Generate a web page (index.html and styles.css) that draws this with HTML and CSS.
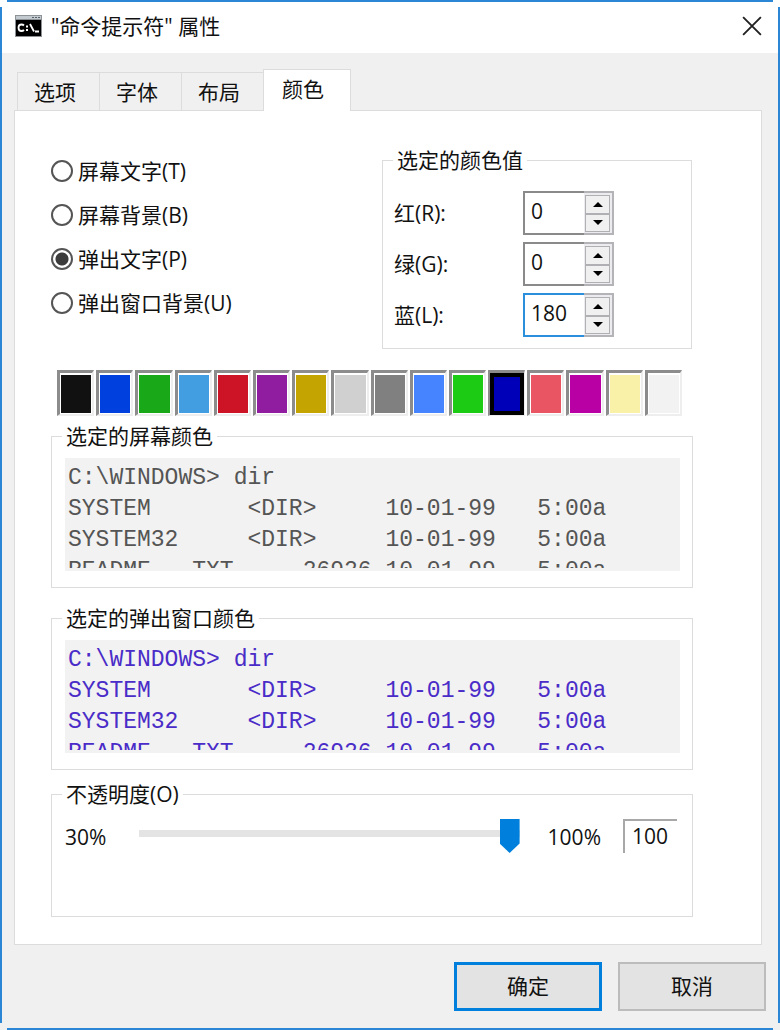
FILE: index.html
```html
<!DOCTYPE html>
<html lang="zh-CN">
<head>
<meta charset="utf-8">
<meta name="viewport" content="width=device-width, initial-scale=1">
<title>"命令提示符" 属性</title>
<link rel="stylesheet" href="styles.css">
</head>
<body>
<form class="window">
  <header class="titlebar">
    <svg class="app-icon" viewBox="0 0 27 22" aria-hidden="true">
      <rect width="27" height="22" fill="#8d9296"/>
      <rect x="1" y="1" width="25" height="3" fill="#c3cbd0"/>
      <path d="M17 2h2v1h-2zM20 2h2v1h-2zM23 2h2v1h-2z" fill="#59636b"/>
      <rect x="1" y="5" width="25" height="16" fill="#000"/>
      <path d="M9 10.500Q8 9.500 6.500 9.500Q3.500 9.500 3.500 12.700Q3.500 16 6.500 16Q8 16 9 15M11 11.500h2M11 15h2M15 9l4 7.500M20 16.500h4" fill="none" stroke="#fff" stroke-width="1.800"/>
    </svg>
    <h1 class="title">"命令提示符" 属性</h1>
    <button class="close" type="button" aria-label="关闭">
      <svg viewBox="0 0 18 18" aria-hidden="true"><path d="M1 1l16 16M17 1L1 17" stroke="#222" stroke-width="1.700"/></svg>
    </button>
  </header>

  <main class="body">
    <nav class="tabs" role="tablist">
      <button class="tab" type="button" role="tab">选项</button>
      <button class="tab" type="button" role="tab">字体</button>
      <button class="tab" type="button" role="tab">布局</button>
      <button class="tab tab-active" type="button" role="tab" aria-selected="true">颜色</button>
    </nav>

    <section class="panel" role="tabpanel">
      <div class="top">
        <div class="targets">
          <label class="target"><input class="radio" type="radio" name="target">屏幕文字(T)</label>
          <label class="target"><input class="radio" type="radio" name="target">屏幕背景(B)</label>
          <label class="target"><input class="radio" type="radio" name="target" checked>弹出文字(P)</label>
          <label class="target"><input class="radio" type="radio" name="target">弹出窗口背景(U)</label>
        </div>
        <fieldset class="group values">
          <legend>选定的颜色值</legend>
          <div class="value-grid">
            <label for="red">红(R):</label>
            <div class="spinner">
              <input class="spin-input" id="red" type="text" value="0">
              <div class="spin-buttons">
                <button class="spin up" type="button" aria-label="增加红"></button>
                <button class="spin down" type="button" aria-label="减少红"></button>
              </div>
            </div>
            <label for="green">绿(G):</label>
            <div class="spinner">
              <input class="spin-input" id="green" type="text" value="0">
              <div class="spin-buttons">
                <button class="spin up" type="button" aria-label="增加绿"></button>
                <button class="spin down" type="button" aria-label="减少绿"></button>
              </div>
            </div>
            <label for="blue">蓝(L):</label>
            <div class="spinner">
              <input class="spin-input spin-focus" id="blue" type="text" value="180">
              <div class="spin-buttons">
                <button class="spin up" type="button" aria-label="增加蓝"></button>
                <button class="spin down" type="button" aria-label="减少蓝"></button>
              </div>
            </div>
          </div>
        </fieldset>
      </div>

      <div class="swatches">
        <button class="swatch black" type="button" aria-label="黑色"></button>
        <button class="swatch blue" type="button" aria-label="蓝色"></button>
        <button class="swatch green" type="button" aria-label="绿色"></button>
        <button class="swatch cyan" type="button" aria-label="青色"></button>
        <button class="swatch red" type="button" aria-label="红色"></button>
        <button class="swatch purple" type="button" aria-label="紫色"></button>
        <button class="swatch gold" type="button" aria-label="金色"></button>
        <button class="swatch silver" type="button" aria-label="银色"></button>
        <button class="swatch gray" type="button" aria-label="灰色"></button>
        <button class="swatch bright-blue" type="button" aria-label="亮蓝"></button>
        <button class="swatch bright-green" type="button" aria-label="亮绿"></button>
        <button class="swatch navy selected" type="button" aria-label="深蓝"></button>
        <button class="swatch coral" type="button" aria-label="亮红"></button>
        <button class="swatch magenta" type="button" aria-label="洋红"></button>
        <button class="swatch cream" type="button" aria-label="淡黄"></button>
        <button class="swatch white" type="button" aria-label="白色"></button>
      </div>

      <fieldset class="group preview">
        <legend>选定的屏幕颜色</legend>
        <div class="console"><pre class="lines">C:\WINDOWS&gt; dir
SYSTEM       &lt;DIR&gt;     10-01-99   5:00a
SYSTEM32     &lt;DIR&gt;     10-01-99   5:00a
README   TXT     26926 10-01-99   5:00a</pre></div>
      </fieldset>

      <fieldset class="group preview popup">
        <legend>选定的弹出窗口颜色</legend>
        <div class="console"><pre class="lines">C:\WINDOWS&gt; dir
SYSTEM       &lt;DIR&gt;     10-01-99   5:00a
SYSTEM32     &lt;DIR&gt;     10-01-99   5:00a
README   TXT     26926 10-01-99   5:00a</pre></div>
      </fieldset>

      <fieldset class="group opacity">
        <legend>不透明度(O)</legend>
        <div class="opacity-row">
          <span class="scale-label">30%</span>
          <input class="slider" type="range" min="30" max="100" value="100" aria-label="不透明度(O)">
          <span class="scale-label">100%</span>
          <input class="opacity-value" type="text" value="100" readonly aria-label="不透明度值">
        </div>
      </fieldset>
    </section>
  </main>

  <footer class="actions">
    <button class="action primary" type="submit">确定</button>
    <button class="action" type="button">取消</button>
  </footer>
</form>
</body>
</html>
```

FILE: styles.css
```css
* {
  box-sizing: border-box;
}

body {
  margin: 0;
  background: #fff;
  color: #111;
  font: 21px/28px "Open Sans", "Noto Sans CJK SC", sans-serif;
}

button,
input {
  margin: 0;
  padding: 0;
  border-radius: 0;
  color: inherit;
  font: inherit;
}

/* Blue frame lines stop short of each corner. */
.window {
  display: flex;
  flex-direction: column;
  min-height: 100vh;
  padding: 2px;
  background:
    linear-gradient(#2b86d6, #2b86d6) center top / calc(100% - 14px) 2px no-repeat,
    linear-gradient(#2b86d6, #2b86d6) center bottom / calc(100% - 14px) 2px no-repeat,
    linear-gradient(#2b86d6, #2b86d6) left center / 2px calc(100% - 14px) no-repeat,
    linear-gradient(#2b86d6, #2b86d6) right center / 2px calc(100% - 14px) no-repeat,
    linear-gradient(#fff 53px, #f0f0f0 53px);
}

.titlebar {
  display: flex;
  align-items: center;
  gap: 9px;
  height: 51px;
  padding: 0 16px 3px 13px;
}

.app-icon {
  width: 27px;
  height: 22px;
}

.title {
  flex: 1;
  margin: 0;
  font-size: 21px;
  font-weight: 400;
}

.close {
  width: 20px;
  height: 28px;
  border: 0;
  background: none;
}

.close svg {
  display: block;
  width: 20px;
  height: 20px;
}

.body {
  flex: 1;
  display: flex;
  flex-direction: column;
  padding: 16px 16px 0 12px;
}

.tabs {
  display: flex;
  align-items: flex-end;
  padding-left: 3px;
}

.tab {
  width: 82px;
  height: 38px;
  padding-right: 7px;
  border: 1px solid #dcdcdc;
  border-width: 1px 0 0 1px;
  background: #f0f0f0;
}

.tab-active {
  z-index: 1;
  width: 88px;
  height: 42px;
  margin-bottom: -1px;
  padding: 0 8px 4px 0;
  border-right-width: 1px;
  background: #fff;
}

.panel {
  flex: 1;
  padding: 35px 68px 27px 36px;
  border: 1px solid #dcdcdc;
  background: #fff;
}

.top {
  display: grid;
  grid-template-columns: 1fr 310px;
  padding-right: 1px;
}

.targets {
  display: flex;
  flex-direction: column;
  gap: 16px;
  padding-top: 11px;
}

.target {
  display: flex;
  align-items: center;
  gap: 5px;
}

.radio {
  appearance: none;
  width: 22px;
  height: 22px;
  border: 2px solid #555;
  border-radius: 50%;
  background: #fff;
}

.radio:checked {
  background: radial-gradient(circle, #3c3c3c 6px, #fff 7px);
}

.group {
  min-width: 0;
  margin: 0;
  padding: 0 12px;
  border: 1px solid #dcdcdc;
}

.group legend {
  margin-left: -3px;
  padding: 0 4px;
}

.values {
  padding: 17px 11px 11px;
}

.values legend {
  margin-left: -1px;
}

.value-grid {
  display: grid;
  grid-template-columns: 129px 91px;
  align-items: center;
  row-gap: 7px;
}

.spinner {
  display: flex;
  height: 44px;
}

.spin-input {
  width: 61px;
  height: 44px;
  padding: 0 0 4px 6px;
  border: 2px solid #8a8a8a;
  border-right: 0;
  background: #fff;
}

.spin-focus {
  border-color: #2b8fdc;
}

.spin-buttons {
  flex: 1;
  display: grid;
  grid-template-rows: 1fr 1fr;
  padding: 2px 2px 1px 1px;
  border: 2px solid #b4b4b8;
  border-left: 0;
  background: #ececee;
}

.spin {
  display: grid;
  place-items: center;
  border: 1px solid #b0b0b4;
  background: #f0f0f0;
}

.spin::before {
  content: "";
  border: solid transparent;
  border-width: 0 5px;
}

.up::before {
  border-bottom: 5px solid #000;
}

.down::before {
  border-top: 5px solid #000;
}

.swatches {
  display: grid;
  grid-template-columns: repeat(16, 1fr);
  gap: 2px;
  margin: 21px 11px 6px 6px;
}

.swatch {
  height: 46px;
  padding: 2px 1px 1px;
  border: solid;
  border-width: 3px 2px 2px 3px;
  border-color: #8c8c8c #eee #eee #8c8c8c;
  background-clip: content-box;
}

.selected {
  padding: 0;
  border-width: 3px 1px 1px 2px;
  box-shadow: inset 0 0 0 4px #000;
}

.black { background-color: #111; }
.blue { background-color: #0040df; }
.green { background-color: #18a818; }
.cyan { background-color: #429ee0; }
.red { background-color: #cc1426; }
.purple { background-color: #901ca0; }
.gold { background-color: #c4a400; }
.silver { background-color: #d0d0d0; }
.gray { background-color: #808080; }
.bright-blue { background-color: #4684ff; }
.bright-green { background-color: #1ccc14; }
.navy { background-color: #0000b8; }
.coral { background-color: #ea5564; }
.magenta { background-color: #b800a4; }
.cream { background-color: #f9f1a8; }
.white { background-color: #f2f2f2; }

.preview {
  padding: 8px 12px 16px 13px;
}

.console {
  height: 113px;
  padding: 5px 3px 3px;
  background: #f2f2f2;
}

.lines {
  height: 105px;
  margin: 0;
  overflow: hidden;
  color: #555;
  font: 23px/31px "Liberation Mono", monospace;
}

.popup {
  margin: 16px 0 10px;
}

.popup .lines {
  color: #4a2cc8;
}

.opacity {
  padding: 11px 15px 63px 13px;
}

.opacity-row {
  display: flex;
  align-items: center;
  height: 34px;
}

.scale-label {
  padding-top: 2px;
}

.slider {
  appearance: none;
  flex: 1;
  min-width: 0;
  height: 34px;
  margin: 0 28px 0 33px;
  border: 0;
  background: linear-gradient(#e4e4e4, #e4e4e4) left 11px / 100% 7px no-repeat;
}

.slider::-webkit-slider-thumb {
  appearance: none;
  width: 20px;
  height: 34px;
  background: #0080dc;
  clip-path: polygon(0 0, 100% 0, 100% 72%, 50% 100%, 0 72%);
}

.opacity-value {
  width: 54px;
  height: 34px;
  margin-left: 22px;
  padding: 0 0 3px 7px;
  border: solid #a8a8a8;
  border-width: 2px 0 0 2px;
  background: #fff;
}

.actions {
  display: flex;
  justify-content: flex-end;
  gap: 16px;
  padding: 17px 12px 17px;
}

.action {
  width: 148px;
  height: 49px;
  padding-bottom: 2px;
  border: 2px solid #bcbcbc;
  background: #e3e3e3;
}

.primary {
  border: 3px solid #0080dc;
}
```
